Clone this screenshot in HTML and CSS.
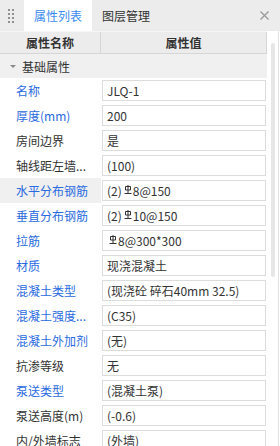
FILE: index.html
```html
<!DOCTYPE html>
<html lang="zh">
<head>
<meta charset="utf-8">
<link rel="stylesheet" href="styles.css">
</head>
<body>
<div class="panel">
  <div class="tabbar">
    <div class="grip">
      <svg width="6" height="14" viewBox="0 0 6 14"><g fill="#909090"><rect x="0" y="0" width="2" height="2"/><rect x="4" y="0" width="2" height="2"/><rect x="0" y="4" width="2" height="2"/><rect x="4" y="4" width="2" height="2"/><rect x="0" y="8" width="2" height="2"/><rect x="4" y="8" width="2" height="2"/><rect x="0" y="12" width="2" height="2"/><rect x="4" y="12" width="2" height="2"/></g></svg>
    </div>
    <div class="tab active">属性列表</div>
    <div class="tab">图层管理</div>
    <div class="close">
      <svg width="9" height="9" viewBox="0 0 9 9"><path d="M0.5 0.5L8.5 8.5M8.5 0.5L0.5 8.5" stroke="#9a9a9a" stroke-width="1.3" fill="none"/></svg>
    </div>
  </div>
  <div class="main">
    <div class="grid">
      <div class="head">
        <div class="hcell name">属性名称</div>
        <div class="hcell val">属性值</div>
      </div>
      <div class="section"><span class="tri"></span>基础属性</div>
      <div class="row"><div class="label blue">名称</div><div class="value"><div class="box">JLQ-1</div></div></div>
      <div class="row"><div class="label blue">厚度(mm)</div><div class="value"><div class="box">200</div></div></div>
      <div class="row"><div class="label">房间边界</div><div class="value"><div class="box">是</div></div></div>
      <div class="row"><div class="label">轴线距左墙...</div><div class="value"><div class="box">(100)</div></div></div>
      <div class="row hl"><div class="label blue">水平分布钢筋</div><div class="value"><div class="box">(2)<svg class="rb" width="8" height="9" viewBox="0 0 8 9"><path d="M1.5 1.5h5v3.5h-5z M4 0v8 M0.5 8.5h7" stroke="#333" stroke-width="1" fill="none"/></svg>8@150</div></div></div>
      <div class="row"><div class="label blue">垂直分布钢筋</div><div class="value"><div class="box">(2)<svg class="rb" width="8" height="9" viewBox="0 0 8 9"><path d="M1.5 1.5h5v3.5h-5z M4 0v8 M0.5 8.5h7" stroke="#333" stroke-width="1" fill="none"/></svg>10@150</div></div></div>
      <div class="row"><div class="label blue">拉筋</div><div class="value"><div class="box"><svg class="rb" width="8" height="9" viewBox="0 0 8 9"><path d="M1.5 1.5h5v3.5h-5z M4 0v8 M0.5 8.5h7" stroke="#333" stroke-width="1" fill="none"/></svg>8@300*300</div></div></div>
      <div class="row"><div class="label blue">材质</div><div class="value"><div class="box">现浇混凝土</div></div></div>
      <div class="row"><div class="label blue">混凝土类型</div><div class="value"><div class="box">(现浇砼 碎石40mm 32.5)</div></div></div>
      <div class="row"><div class="label blue">混凝土强度...</div><div class="value"><div class="box">(C35)</div></div></div>
      <div class="row"><div class="label blue">混凝土外加剂</div><div class="value"><div class="box">(无)</div></div></div>
      <div class="row"><div class="label">抗渗等级</div><div class="value"><div class="box">无</div></div></div>
      <div class="row"><div class="label blue">泵送类型</div><div class="value"><div class="box">(混凝土泵)</div></div></div>
      <div class="row"><div class="label">泵送高度(m)</div><div class="value"><div class="box">(-0.6)</div></div></div>
      <div class="row"><div class="label">内/外墙标志</div><div class="value"><div class="box">(外墙)</div></div></div>
    </div>
    <div class="scroll"><div class="thumb"></div></div>
  </div>
</div>
</body>
</html>
```

FILE: styles.css
```css
html, body {
  margin: 0;
  padding: 0;
  background: #fff;
}
body {
  font-family: "Noto Sans CJK SC", "Microsoft YaHei", sans-serif;
  font-size: 12px;
  color: #333;
}
.panel {
  width: 280px;
  height: 446px;
  overflow: hidden;
  background: #fff;
}
.tabbar {
  display: flex;
  height: 31px;
  background: #ececec;
}
.grip {
  width: 24px;
  box-sizing: border-box;
  padding: 9px 0 0 8px;
}
.grip svg {
  display: block;
}
.tab {
  display: flex;
  align-items: center;
  padding: 0 10px;
  color: #333;
  white-space: nowrap;
}
.tab.active {
  width: 68px;
  box-sizing: border-box;
  justify-content: center;
  padding: 0;
  background: #fff;
  color: #3b8cf0;
}
.close {
  margin-left: auto;
  display: flex;
  align-items: center;
  padding-right: 11px;
}
.close svg {
  display: block;
}
.main {
  display: flex;
  height: 415px;
}
.grid {
  width: 267px;
  flex: none;
}
.head {
  display: flex;
  height: 23px;
  box-sizing: border-box;
  background: #ececec;
  border-bottom: 1px solid #d6d6d6;
  border-top: 1px solid #f6f6f6;
  font-weight: 700;
  color: #333;
}
.hcell {
  display: flex;
  align-items: center;
  justify-content: center;
  box-sizing: border-box;
  border-right: 1px solid #d6d6d6;
}
.hcell.name {
  width: 101px;
}
.hcell.val {
  flex: 1;
}
.section {
  display: flex;
  align-items: center;
  height: 24px;
  padding-left: 10px;
  background: #f0f0f0;
  color: #333;
}
.tri {
  width: 0;
  height: 0;
  border-left: 3px solid transparent;
  border-right: 3px solid transparent;
  border-top: 3px solid #8a8a8a;
  margin-right: 6px;
}
.row {
  display: flex;
  height: 25px;
}
.label {
  width: 101px;
  flex: none;
  box-sizing: border-box;
  padding-left: 16px;
  display: flex;
  align-items: center;
  white-space: nowrap;
  color: #333;
}
.label.blue {
  color: #2a6ae0;
}
.row.hl .label {
  background: #f0f0f0;
}
.value {
  flex: 1;
  padding: 2px 1px 2px 1px;
}
.box {
  height: 21px;
  box-sizing: border-box;
  border: 1px solid #dcdcdc;
  display: flex;
  align-items: center;
  padding-left: 4px;
  white-space: nowrap;
  overflow: hidden;
  color: #333;
}
.rb {
  display: block;
  margin: 0 1px 3px 2px;
}
.scroll {
  width: 11px;
  flex: none;
  border-right: 1px solid #e2e2e2;
}
.thumb {
  margin: 12px 0 0 4px;
  width: 4px;
  height: 234px;
  border-radius: 2px;
  background: #e6e6e6;
}
```
